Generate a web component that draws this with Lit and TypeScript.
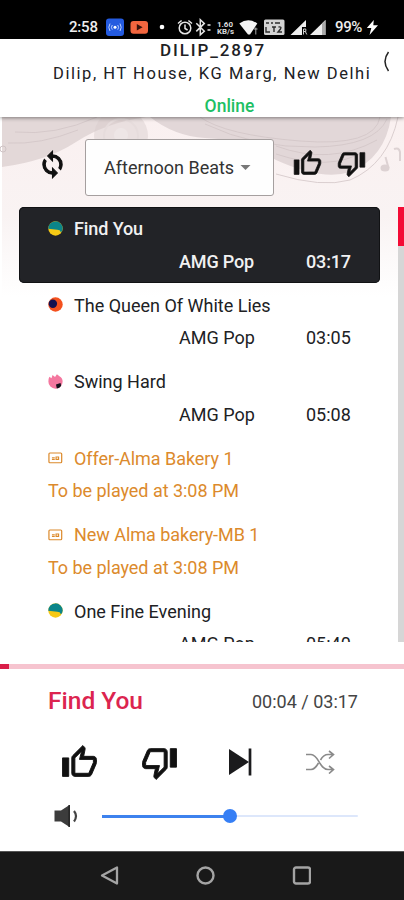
import { LitElement, html, svg, css } from "lit";
import { customElement, property } from "lit/decorators.js";

type Cover = "dune" | "moon" | "flame" | "ad";

interface Entry {
  title: string;
  cover: Cover;
  genre?: string;
  length?: string;
  note?: string;
  active?: boolean;
}

const queue: Entry[] = [
  { title: "Find You", cover: "dune", genre: "AMG Pop", length: "03:17", active: true },
  { title: "The Queen Of White Lies", cover: "moon", genre: "AMG Pop", length: "03:05" },
  { title: "Swing Hard", cover: "flame", genre: "AMG Pop", length: "05:08" },
  { title: "Offer-Alma Bakery 1", cover: "ad", note: "To be played at 3:08 PM" },
  { title: "New Alma bakery-MB 1", cover: "ad", note: "To be played at 3:08 PM" },
  { title: "One Fine Evening", cover: "dune", genre: "AMG Pop", length: "05:40" },
];

const covers = {
  dune: svg`<circle cx="8" cy="8" r="7.7" fill="#f6c915"/><path d="M.3 8.2A7.7 7.7 0 0 1 15.7 8q-.2 2.600-2 4l-1.300-2.200L10 9.200Z" fill="#0b8589"/>`,
  moon: svg`<circle cx="8" cy="8" r="7.7" fill="#f4511e"/><circle cx="5.200" cy="7.200" r="4.500" fill="#13104f"/>`,
  flame: svg`<path d="M.4 8Q.4 4.500 1.500 3l2.200 1.500L4.800 1l2.700 2.200L9.500.3l2.700 2.200Q15.700 4.500 15.600 8.200A7.600 7.600 0 0 1 .4 8Z" fill="#f4779f"/><path d="M8.500 11.200l4.800-1.700.8 2.900q-1.700 2.600-4.700 3Z" fill="#15121c"/>`,
  ad: svg`<rect x="1" y="3.200" width="13.600" height="10.400" rx="1" fill="none" stroke="#dc8a2c" stroke-width="1.300"/><path d="M4.200 8.200h3M4.200 10h3M8.600 10V7.500h2.700V10Z" fill="none" stroke="#dc8a2c" stroke-width="1.200"/>`,
};

const thumb = svg`<path d="M9 21h9c.83 0 1.540-.5 1.840-1.220l3.020-7.050c.09-.23.14-.47.14-.73v-2c0-1.100-.9-2-2-2h-6.310l.95-4.570.03-.32c0-.41-.17-.79-.44-1.060L14.170 1 7.580 7.590C7.220 7.950 7 8.450 7 9v10c0 1.100.9 2 2 2zM9 9l4.340-4.340L12 10h9v2l-3 7H9V9zM1 9h4v12H1z"/>`;

@customElement("thumb-icon")
export class ThumbIcon extends LitElement {
  @property({ type: Boolean }) down = false;
  static styles = css`
    :host { display: block; }
    svg { display: block; width: 100%; height: 100%; fill: #111; stroke: #111; stroke-width: .6; }
    .down { transform: rotate(180deg); }
  `;
  render() {
    return html`<svg class=${this.down ? "down" : "up"} viewBox="0 0 24 24">${thumb}</svg>`;
  }
}

@customElement("queue-row")
export class QueueRow extends LitElement {
  @property({ attribute: false }) entry!: Entry;
  static styles = css`
    :host { display: block; height: 76.500px; flex: none; }
    .row {
      box-sizing: border-box; height: 76px; padding: 6px 0 0 29px; border-radius: 5px;
      color: #202124; font-size: 18px; line-height: 32.500px; white-space: nowrap;
    }
    .active { background: #222327; color: #f1f1f2; font-weight: 500; box-shadow: inset 0 0 0 1px #111214; }
    .ad { color: #dc8a2c; }
    .title { display: flex; align-items: center; gap: 11px; }
    .cover { width: 15px; height: 15px; flex: none; position: relative; top: -1px; }
    .name { letter-spacing: 0; }
    .ad .name, .note { letter-spacing: -.04px; }
    .active .name { letter-spacing: -.1px; }
    .active .meta { letter-spacing: -.15px; }
    .meta { display: grid; grid-template-columns: 131px 127px auto; }
    .genre { grid-column: 2; }
  `;
  render() {
    const e = this.entry;
    return html`<div class="row ${e.active ? "active" : ""} ${e.note ? "ad" : ""}">
      <div class="title">
        <svg class="cover" viewBox="0 0 16 16">${covers[e.cover]}</svg><span class="name">${e.title}</span>
      </div>
      ${e.note
        ? html`<div class="note">${e.note}</div>`
        : html`<div class="meta"><span class="genre">${e.genre}</span><span class="length">${e.length}</span></div>`}
    </div>`;
  }
}

@customElement("app-root")
export class AppRoot extends LitElement {
  static styles = css`
    :host {
      display: flex; flex-direction: column; width: 404px; height: 900px; overflow: hidden;
      background: #fff; color: #202124; font-family: Roboto, "Noto Sans", sans-serif;
    }
    svg { display: block; flex: none; }
    .status {
      height: 39px; flex: none; background: #000; color: #eee; display: flex; align-items: flex-end;
      box-sizing: border-box; padding: 0 0 1px 69px; font-size: 15px; font-weight: 500; line-height: 22px;
    }
    .clock { width: 35px; letter-spacing: -.2px; }
    .battery { width: 31px; letter-spacing: -.4px; }
    .kb { font: 700 8px Roboto, sans-serif; fill: #ddd; }
    .header {
      height: 78px; flex: none; box-sizing: border-box; display: grid; grid-template-columns: 1fr 33px;
      box-shadow: 0 1px 4px rgba(0,0,0,.45); z-index: 1; background: #fff;
    }
    .venue { display: flex; flex-direction: column; align-items: center; white-space: nowrap; padding-left: 53px; }
    .code { font-size: 17px; line-height: 22px; font-weight: 500; letter-spacing: 1.900px; }
    .address { font-size: 16.500px; line-height: 26px; letter-spacing: 1.550px; width: 320px; }
    .online { color: #1dc064; font-size: 17.500px; font-weight: 500; line-height: 24px; margin-top: 7px; padding-left: 33px; }
    .toggle { margin: 11px 0 0 9px; }
    .hero { position: relative; height: 525px; flex: none; display: flex; flex-direction: column; }
    .art { position: absolute; inset: 0 0 auto 0; }
    .tools { position: relative; height: 90px; flex: none; display: flex; align-items: flex-start; }
    .sync { margin: 33px 0 0 38px; }
    .picker {
      margin: 22px 0 0 18px; width: 189px; height: 57px; box-sizing: border-box; border: 1px solid #a59f9f; border-radius: 3px;
      background: #fefefe; display: flex; align-items: center; padding-left: 18px; font-size: 18px; color: #333;
    }
    .mood { width: 136px; white-space: nowrap; }
    .small { width: 29px; height: 29px; margin-top: 32px; }
    .small.like { margin-left: 19px; }
    .small.nope { margin-left: 15px; }
    .scroller { position: relative; display: flex; height: 435px; justify-content: space-between; }
    .list { width: 361px; margin-left: 19px; overflow: hidden; display: flex; flex-direction: column; }
    .rail { width: 6px; background: #d6d6d6; }
    .handle { height: 39px; background: #f30b35; }
    .player { height: 209px; flex: none; box-sizing: border-box; padding-top: 22px; }
    .progress { height: 5px; background: #f6c4cf; }
    .played { width: 9px; height: 100%; background: #d91d48; }
    .now { display: flex; justify-content: space-between; align-items: center; height: 62px; box-sizing: border-box; padding: 0 46px 0 48px; white-space: nowrap; }
    .song { color: #dc244f; font-size: 24.500px; font-weight: 500; }
    .time { font-size: 18px; color: #444; padding-top: 2px; }
    .controls { display: flex; align-items: center; height: 62px; padding-left: 61px; }
    .big { width: 37px; height: 37px; }
    .big.nope { margin-left: 43px; }
    .skip { margin-left: 50px; }
    .shuffle { margin-left: 53px; }
    .volume { display: flex; align-items: center; height: 46px; padding-left: 53px; }
    .slider { width: 256px; height: 2px; margin-left: 23px; background: #dde7fb; display: flex; align-items: center; border-radius: 2px; }
    .level { height: 3px; background: #3d82ee; }
    .knob { width: 14px; height: 14px; border-radius: 50%; background: #367ff5; margin-left: -7px; flex: none; }
    .nav { height: 49px; flex: none; background: #191919; border-top: 1px solid #555; box-sizing: border-box; display: flex; padding: 12px 0 0 99px; gap: 76px; }
  `;

  render() {
    return html`
      <div class="status">
        <span class="clock">2:58</span>
        <svg width="231" height="22" viewBox="104 15 231 22">
          <rect x="106" y="17.500" width="18" height="17.500" rx="3" fill="#245be0"/>
          <circle cx="115" cy="26.300" r="1.500" fill="#fff"/>
          <path d="M112.300 24q-1.800 2.300 0 4.600m5.400-4.600q1.800 2.300 0 4.600m-7.700-6q-2.400 3.700 0 7.400m10-7.400q2.400 3.700 0 7.400" fill="none" stroke="#b9cfff" stroke-width="1"/>
          <rect x="130.500" y="20" width="17.500" height="12.800" rx="3" fill="#f2663f"/>
          <path d="M136.800 23l5.800 3.300-5.800 3.300Z" fill="#35120b"/>
          <circle cx="162" cy="26" r="2.300" fill="#fff"/>
          <g fill="none" stroke="#e6e6e6" stroke-width="1.500">
            <circle cx="185" cy="27" r="5.800"/>
            <path d="M185 23.500v4l2.600 1.500M178 22.500l3.600-3m10.400 3l-3.600-3"/>
            <path d="M196.300 22.200l8 8-4 3.700V18.700l4 3.700-8 8"/>
            <path d="M207.500 24h3m-3 5h3"/>
          </g>
          <text class="kb" x="217" y="25.500" textLength="16" lengthAdjust="spacingAndGlyphs">1.60</text>
          <text class="kb" x="217" y="33" textLength="17" lengthAdjust="spacingAndGlyphs">KB/s</text>
          <path d="M239.300 22.500q9-6.500 18 0L250 33.500h-2Z" fill="#f4f4f4"/>
          <path d="M254 28h3.500m-1.700-1.500v7" stroke="#aaa" stroke-width="1" fill="none"/>
          <rect x="264" y="18.500" width="20.500" height="15.500" rx="1.500" fill="#d4d4d4"/>
          <path d="M266 22h3m2 0h2m2 0h5M266 26v5h4m2-5h4m-2 0v5m4.500-5q3.500-.5 2 2l-2.500 3h4" stroke="#2c2c2c" stroke-width="1.400" fill="none"/>
          <path d="M290.500 34L306 19v7h-4v8Z" fill="#eee"/>
          <path d="M303.500 33.500v-5.500h2.300v2.500h-2m1.500 0l1.500 3" stroke="#ccc" stroke-width="1" fill="none"/>
          <path d="M310 34l15.500-15v15Z" fill="#eee"/><path d="M322 22.500l3.500-3.500v15H322Z" fill="#aaa"/>
        </svg>
        <span class="battery">99%</span>
        <svg width="13" height="22" viewBox="0 0 13 22"><path d="M7.800 4L.8 12h4.500L3.500 19l8.500-9.800H7.300Z" fill="#fff"/></svg>
      </div>

      <div class="header">
        <div class="venue">
          <div class="code">DILIP_2897</div>
          <div class="address">Dilip, HT House, KG Marg, New Delhi</div>
          <div class="online">Online</div>
        </div>
        <svg class="toggle" width="10" height="24" viewBox="0 0 10 24"><path d="M6.500 2Q-.5 11.500 6.500 21" fill="none" stroke="#222" stroke-width="1.500"/></svg>
      </div>

      <div class="hero">
        <svg class="art" width="404" height="180" viewBox="0 117 404 180">
          <defs>
            <linearGradient id="wash" x2="0" y2="1"><stop offset="0" stop-color="#faf0f0"/><stop offset=".55" stop-color="#f9f3f3"/><stop offset="1" stop-color="#fff"/></linearGradient>
          </defs>
          <rect x="2" y="117" width="402" height="180" fill="url(#wash)"/>
          <path d="M2 117H146Q105 123 76 142T2 167Z" fill="#e3d8d8"/>
          <path d="M150 117H391Q385 158 350 172Q322 181 276 160Q242 139 205 138Q174 136 150 117Z" fill="#e2d7d8"/>
          <g fill="none" stroke="#d2c5c6" stroke-width=".8">
            <path d="M15 132Q55 136 97 117M8 143Q40 145 78 130"/>
            <path d="M200 117Q225 135 300 141T380 117M205 124Q255 148 315 147T387 119M276 146Q330 166 377 140M276 154Q330 172 365 151"/>
            <path d="M398 117Q388 164 350 180Q322 188 276 174"/>
          </g>
          <circle cx="121" cy="136" r="27" fill="#d8cccd" opacity=".45"/>
          <circle cx="121" cy="136" r="17" fill="none" stroke="#e6dcdc" stroke-width="2"/>
          <circle cx="121" cy="135" r="7" fill="#eee6e6"/>
          <ellipse cx="385" cy="168" rx="4.500" ry="3.500" fill="#ddd2d3"/>
          <path d="M388.500 168l-3-11M394 149q5-2 6 3v9" fill="none" stroke="#ddd2d3" stroke-width="2"/>
          <circle cx="3" cy="149" r="3" fill="none" stroke="#cfc4c5"/>
        </svg>
        <div class="tools">
          <svg class="sync" width="29" height="29" viewBox="0 0 24 24">
            <path d="M12 4V1L8 5l4 4V6c3.310 0 6 2.690 6 6 0 1.010-.25 1.970-.7 2.800l1.460 1.460C19.540 15.030 20 13.570 20 12c0-4.420-3.580-8-8-8zm0 14c-3.310 0-6-2.690-6-6 0-1.010.25-1.970.7-2.800L5.240 7.740C4.460 8.970 4 10.430 4 12c0 4.420 3.580 8 8 8v3l4-4-4-4v3z" fill="#111" stroke="#111" stroke-width=".9"/>
          </svg>
          <div class="picker">
            <span class="mood">Afternoon Beats</span>
            <svg width="11" height="7" viewBox="0 0 11 7"><path d="M.5 1h10l-5 5Z" fill="#777"/></svg>
          </div>
          <thumb-icon class="small like"></thumb-icon>
          <thumb-icon class="small nope" down></thumb-icon>
        </div>
        <div class="scroller">
          <div class="list">${queue.map((entry) => html`<queue-row .entry=${entry}></queue-row>`)}</div>
          <div class="rail"><div class="handle"></div></div>
        </div>
      </div>

      <div class="player">
        <div class="progress"><div class="played"></div></div>
        <div class="now"><span class="song">Find You</span><span class="time">00:04 / 03:17</span></div>
        <div class="controls">
          <thumb-icon class="big like"></thumb-icon>
          <thumb-icon class="big nope" down></thumb-icon>
          <svg class="skip" width="24" height="28" viewBox="0 0 24 28"><path d="M1 1L21 14 1 27Z" fill="#1b1b1d"/><path d="M22 .5v27" stroke="#1b1b1d" stroke-width="2.700"/></svg>
          <svg class="shuffle" width="30" height="24" viewBox="0 0 30 24"><path d="M1 4.500h5c8 0 8 15 17 15h5M1 19.500h5c3.500 0 5.500-3 7.500-6.500M15.500 10c2-3.500 4-5.500 7.500-5.500h5M24 1l4.500 3.500L24 8.500M24 16l4.500 3.500L24 23.500" fill="none" stroke="#8a8a8a" stroke-width="1.600"/></svg>
        </div>
        <div class="volume">
          <svg width="26" height="26" viewBox="0 0 26 26"><path d="M1.500 7.500H8L16.500 2v22L8 18.500H1.500Z" fill="#3c3c3c"/><path d="M16.200 2v22" stroke="#222" stroke-width="1.500"/><path d="M21 8q4 5 0 10.500" fill="none" stroke="#444" stroke-width="2.200"/></svg>
          <div class="slider"><div class="level" style="width:50%"></div><div class="knob"></div></div>
        </div>
      </div>

      <div class="nav">
        <svg width="20" height="22" viewBox="0 0 20 22"><path d="M18 3.500v16L3 11.500Z" fill="none" stroke="#a4a4a4" stroke-width="2.300" stroke-linejoin="round"/></svg>
        <svg width="20" height="22" viewBox="0 0 20 22"><circle cx="10.500" cy="11.500" r="8" fill="none" stroke="#a4a4a4" stroke-width="2.400"/></svg>
        <svg width="20" height="22" viewBox="0 0 20 22"><rect x="3" y="3.500" width="16" height="16" rx="2" fill="none" stroke="#a4a4a4" stroke-width="2.400"/></svg>
      </div>
    `;
  }
}
